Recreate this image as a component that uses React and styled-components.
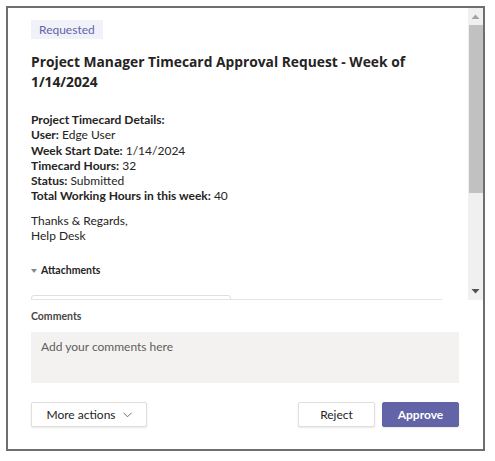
import styled, { createGlobalStyle } from "styled-components";

const GlobalStyle = createGlobalStyle`
    html, body {
        margin: 0;
        padding: 0;
        background: #ffffff;
    }
    body {
        font-family: Lato, "Open Sans", Arial, sans-serif;
        color: #252423;
    }
`;

const Frame = styled.div`
    box-sizing: border-box;
    margin: 6px;
    width: 479px;
    height: 445px;
    border: 2px solid #6e6e6e;
    background: #ffffff;
    display: flex;
    flex-direction: column;
`;
const Body = styled.div`
    height: 292px;
    display: flex;
    flex-direction: row;
    flex-shrink: 0;
`;
const Viewport = styled.div`
    flex: 1;
    margin: 0 26px 0 23px;
    overflow: hidden;
    border-bottom: 1px solid #e6e5e4;
    display: flex;
    flex-direction: column;
`;
const Scrollbar = styled.div`
    width: 15px;
    background: #f0f0f0;
    display: flex;
    flex-direction: column;
    align-items: center;
`;
const ArrowBox = styled.div`
    width: 15px;
    height: ${(p) => p.$h}px;
    display: flex;
    align-items: center;
    justify-content: center;
`;
const Thumb = styled.div`
    width: 14px;
    margin-left: 1px;
    height: 168px;
    background: #c1c1c1;
`;
const Spacer = styled.div`
    flex: 1;
`;
const Badge = styled.div`
    align-self: flex-start;
    margin-top: 12px;
    height: 19px;
    padding: 0 8px;
    background: #f1f1fa;
    color: #6264a7;
    font-size: 12px;
    line-height: 19px;
`;
const Title = styled.div`
    margin-top: 13px;
    font-family: "Open Sans", Arial, sans-serif;
    font-size: 13.8px;
    font-weight: 700;
    line-height: 20px;
    color: #252423;
`;
const Details = styled.div`
    margin-top: 20px;
    font-size: 12px;
    line-height: 15.25px;
`;
const Line = styled.div`
    white-space: nowrap;
`;
const Label = styled.span`
    font-weight: 700;
`;
const Signoff = styled.div`
    margin-top: 9px;
    font-size: 12px;
    line-height: 15.25px;
`;
const AttachHeader = styled.div`
    margin-top: 20px;
    display: flex;
    align-items: center;
    gap: 4px;
    font-size: 10.5px;
    font-weight: 700;
    line-height: 15px;
    color: #252423;
`;
const AttachCard = styled.div`
    margin-top: 17px;
    width: 198px;
    height: 40px;
    flex-shrink: 0;
    border: 1px solid #e1dfdd;
    border-radius: 3px;
`;
const Footer = styled.div`
    padding: 0 24px 0 23px;
    display: flex;
    flex-direction: column;
`;
const CommentsLabel = styled.div`
    margin-top: 9px;
    font-size: 10.5px;
    font-weight: 700;
    line-height: 14px;
    color: #484644;
`;
const CommentBox = styled.div`
    margin-top: 9px;
    height: 51px;
    background: #f3f2f1;
    padding: 7px 10px;
    box-sizing: border-box;
    font-size: 12px;
    line-height: 15px;
    color: #605e5c;
`;
const Actions = styled.div`
    margin-top: 19px;
    display: flex;
    align-items: center;
    gap: 7px;
`;
const Button = styled.button`
    box-sizing: border-box;
    height: 25px;
    width: ${(p) => p.$w}px;
    font-family: inherit;
    font-size: 12px;
    font-weight: ${(p) => (p.$primary ? 700 : 400)};
    color: ${(p) => (p.$primary ? "#ffffff" : "#252423")};
    background: ${(p) => (p.$primary ? "#6264a7" : "#ffffff")};
    border: 1px solid ${(p) => (p.$primary ? "#6264a7" : "#e1dfdd")};
    border-radius: 2px;
    box-shadow: 0 1px 2px rgba(0, 0, 0, 0.1);
    display: flex;
    align-items: center;
    justify-content: center;
    gap: 7px;
    padding: 0;
`;
const Push = styled.div`
    flex: 1;
`;

function Tri({ color, up }) {
    return (
        <svg width="9" height="5" viewBox="0 0 9 5">
            <polygon points={up ? "0.5,5 8.5,5 4.5,0.5" : "0.5,0 8.5,0 4.5,4.5"} fill={color} />
        </svg>
    );
}

export default function App() {
    return (
        <>
            <GlobalStyle />
            <Frame>
                <Body>
                    <Viewport>
                        <Badge>Requested</Badge>
                        <Title>Project Manager Timecard Approval Request - Week of 1/14/2024</Title>
                        <Details>
                            <Line><Label>Project Timecard Details:</Label></Line>
                            <Line><Label>User:</Label> Edge User</Line>
                            <Line><Label>Week Start Date:</Label> 1/14/2024</Line>
                            <Line><Label>Timecard Hours:</Label> 32</Line>
                            <Line><Label>Status:</Label> Submitted</Line>
                            <Line><Label>Total Working Hours in this week:</Label> 40</Line>
                        </Details>
                        <Signoff>
                            <Line>Thanks &amp; Regards,</Line>
                            <Line>Help Desk</Line>
                        </Signoff>
                        <AttachHeader>
                            <svg width="6" height="4" viewBox="0 0 6 4">
                                <polygon points="0,0 6,0 3,4" fill="#8a8886" />
                            </svg>
                            Attachments
                        </AttachHeader>
                        <AttachCard />
                    </Viewport>
                    <Scrollbar>
                        <ArrowBox $h={17}><Tri color="#a3a3a3" up /></ArrowBox>
                        <Thumb />
                        <Spacer />
                        <ArrowBox $h={17}><Tri color="#505050" /></ArrowBox>
                    </Scrollbar>
                </Body>
                <Footer>
                    <CommentsLabel>Comments</CommentsLabel>
                    <CommentBox>Add your comments here</CommentBox>
                    <Actions>
                        <Button $w={116}>
                            More actions
                            <svg width="9" height="6" viewBox="0 0 9 6">
                                <polyline points="0.5,0.8 4.5,4.8 8.5,0.8" fill="none" stroke="#605e5c" strokeWidth="0.9" />
                            </svg>
                        </Button>
                        <Push />
                        <Button $w={77}>Reject</Button>
                        <Button $w={77} $primary>Approve</Button>
                    </Actions>
                </Footer>
            </Frame>
        </>
    );
}
